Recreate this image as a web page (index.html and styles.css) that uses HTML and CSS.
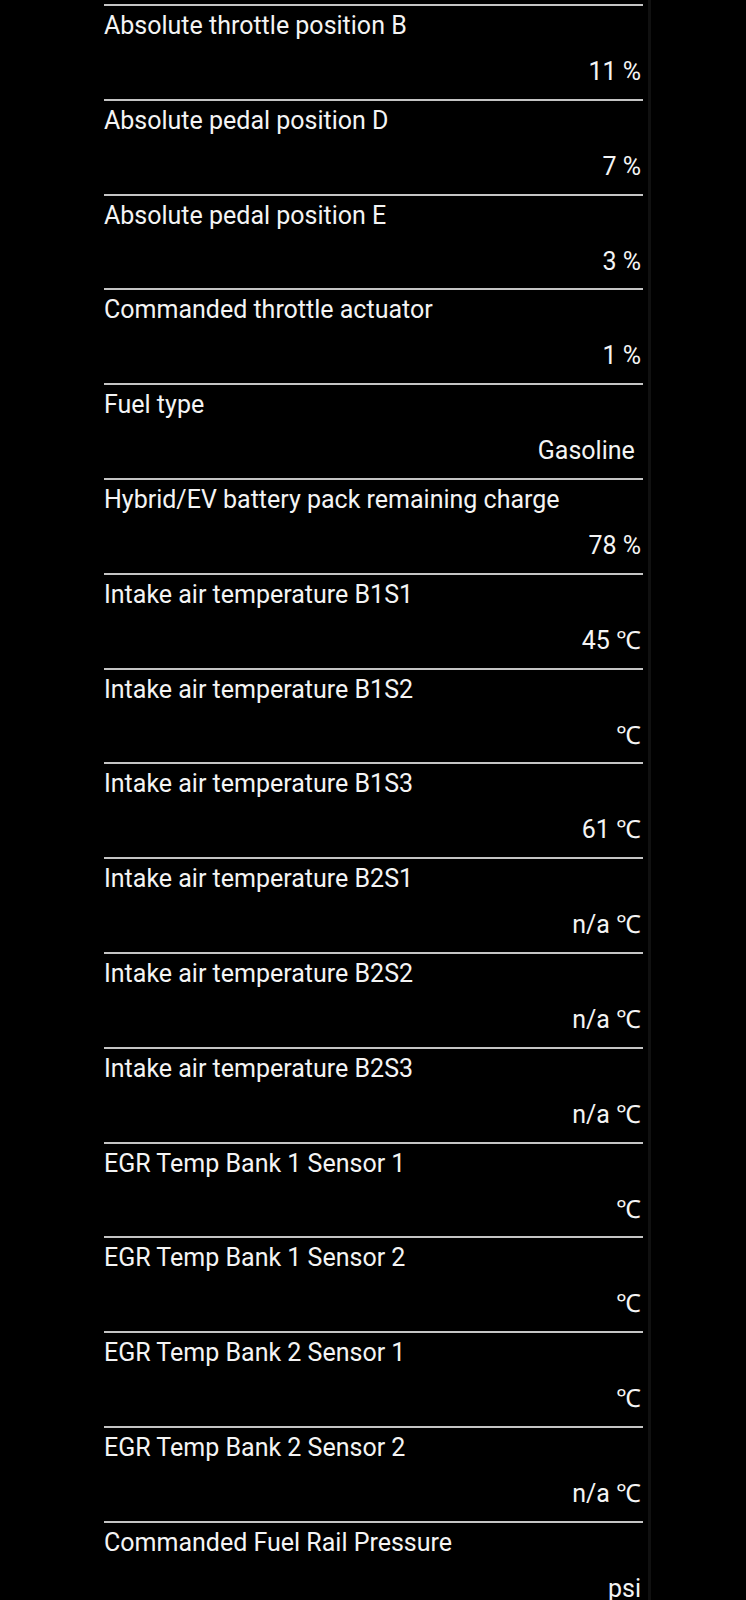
FILE: index.html
```html
<!DOCTYPE html>
<html>
<head>
<meta charset="utf-8">
<link rel="stylesheet" href="styles.css">
</head>
<body>
<div class="panel">
  <div class="row"><div class="label">Absolute throttle position B</div><div class="value">11 %</div></div>
  <div class="row"><div class="label">Absolute pedal position D</div><div class="value">7 %</div></div>
  <div class="row"><div class="label">Absolute pedal position E</div><div class="value">3 %</div></div>
  <div class="row"><div class="label">Commanded throttle actuator</div><div class="value">1 %</div></div>
  <div class="row"><div class="label">Fuel type</div><div class="value">Gasoline&nbsp;</div></div>
  <div class="row"><div class="label">Hybrid/EV battery pack remaining charge</div><div class="value">78 %</div></div>
  <div class="row"><div class="label">Intake air temperature B1S1</div><div class="value">45 ℃</div></div>
  <div class="row"><div class="label">Intake air temperature B1S2</div><div class="value">℃</div></div>
  <div class="row"><div class="label">Intake air temperature B1S3</div><div class="value">61 ℃</div></div>
  <div class="row"><div class="label">Intake air temperature B2S1</div><div class="value">n/a ℃</div></div>
  <div class="row"><div class="label">Intake air temperature B2S2</div><div class="value">n/a ℃</div></div>
  <div class="row"><div class="label">Intake air temperature B2S3</div><div class="value">n/a ℃</div></div>
  <div class="row"><div class="label">EGR Temp Bank 1 Sensor 1</div><div class="value">℃</div></div>
  <div class="row"><div class="label">EGR Temp Bank 1 Sensor 2</div><div class="value">℃</div></div>
  <div class="row"><div class="label">EGR Temp Bank 2 Sensor 1</div><div class="value">℃</div></div>
  <div class="row"><div class="label">EGR Temp Bank 2 Sensor 2</div><div class="value">n/a ℃</div></div>
  <div class="row"><div class="label">Commanded Fuel Rail Pressure</div><div class="value">psi</div></div>
</div>
</body>
</html>
```
FILE: styles.css
```css
html, body {
  margin: 0;
  padding: 0;
  background: #000;
  height: 1600px;
  overflow: hidden;
}
.panel {
  width: 651px;
  min-height: 1600px;
  box-sizing: border-box;
  padding: 4px 5px 0 104px;
  border-right: 3px solid #101010;
  font-family: Roboto, "Noto Sans", sans-serif;
  color: #f4f4f4;
  font-size: 25px;
}
.row {
  height: 94.8px;
  box-sizing: border-box;
  border-top: 2px solid #c4c4c4;
  display: flex;
  flex-direction: column;
}
.label {
  line-height: 29px;
  padding: 5px 0 0 0;
  white-space: nowrap;
}
.value {
  line-height: 29px;
  margin-top: 17px;
  text-align: right;
  padding-right: 2px;
  white-space: nowrap;
}
```
